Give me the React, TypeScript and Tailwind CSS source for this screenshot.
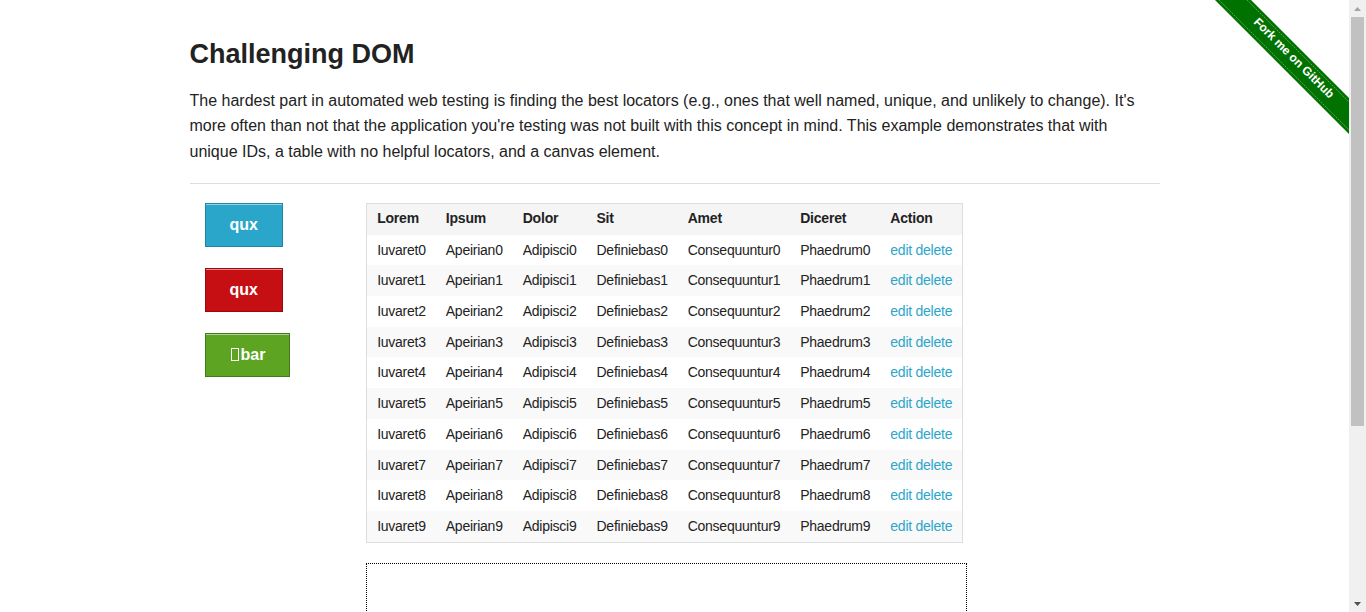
import React from "react";

const rows = Array.from({ length: 10 }, (_, i) => i);

function ForkRibbon() {
  return (
    <svg
      className="absolute top-0 right-0"
      width="137"
      height="137"
      viewBox="0 0 137 137"
    >
      <polygon points="3,0 39,0 137,98 137,134" fill="#007200" />
      <line x1="7" y1="0" x2="137" y2="130" stroke="rgba(255,255,255,0.35)" strokeWidth="1" strokeDasharray="2 1" />
      <line x1="35" y1="0" x2="137" y2="102" stroke="rgba(255,255,255,0.35)" strokeWidth="1" strokeDasharray="2 1" />
      <text
        transform="translate(82 58) rotate(45)"
        textAnchor="middle"
        dominantBaseline="central"
        fill="#ffffff"
        fontFamily="'Liberation Sans', Arial, sans-serif"
        fontWeight="700"
        fontSize="12"
      >
        Fork me on GitHub
      </text>
    </svg>
  );
}

// window scrollbar, as seen in the screenshot
function Scrollbar() {
  return (
    <div className="w-[17px] h-full flex flex-col bg-[#f0f0f0] shrink-0">
      <div className="h-[17px] flex items-center justify-center">
        <svg width="7" height="4" viewBox="0 0 7 4">
          <polygon points="0,4 3.5,0 7,4" fill="#a3a3a3" />
        </svg>
      </div>
      <div className="flex-1 px-[2px]">
        <div className="h-[409px] bg-[#c1c1c1]" />
      </div>
      <div className="h-[17px] flex items-center justify-center">
        <svg width="7" height="4" viewBox="0 0 7 4">
          <polygon points="0,0 3.5,4 7,0" fill="#505050" />
        </svg>
      </div>
    </div>
  );
}

const td = "px-[10px] py-[6px] text-[14px] leading-[18.7px] tracking-[-0.25px]";

export default function App() {
  return (
    <div className="flex h-[612px] bg-white overflow-hidden">
      <div className="relative flex-1 overflow-hidden text-[#222222] font-['Liberation_Sans',Arial,sans-serif]">
        <ForkRibbon />
        <div className="w-[970px] mx-auto pt-[36px]">
          <h3 className="text-[27px] leading-[1.4] font-bold mb-[14px]">Challenging DOM</h3>
          <p className="text-[16px] leading-[1.6]">
            The hardest part in automated web testing is finding the best locators (e.g., ones that well named,
            unique, and unlikely to change). It's more often than not that the application you're testing was not
            built with this concept in mind. This example demonstrates that with unique IDs, a table with no
            helpful locators, and a canvas element.
          </p>
          <hr className="mt-[18px] mb-[19px] border-0 border-t border-[#dddddd]" />

          <div className="flex">
            {/* buttons column */}
            <div className="w-[161.67px] px-[15px] flex flex-col items-start gap-[21px]">
              <a className="block h-[44px] px-[24px] leading-[42px] text-[16px] font-bold text-white bg-[#2ba6cb] border border-[#2284a1] shadow-[inset_0_1px_0_rgba(255,255,255,0.5)]">
                qux
              </a>
              <a className="block h-[44px] px-[24px] leading-[42px] text-[16px] font-bold text-white bg-[#c60f13] border border-[#970b0e] shadow-[inset_0_1px_0_rgba(255,255,255,0.5)]">
                qux
              </a>
              <a className="flex items-center h-[44px] px-[24px] text-[16px] font-bold text-white bg-[#5da423] border border-[#457a1a] shadow-[inset_0_1px_0_rgba(255,255,255,0.5)]">
                <span className="inline-block w-[8px] h-[13px] border border-white ml-[1px] mr-[2px]" />
                bar
              </a>
            </div>

            {/* table + canvas column */}
            <div className="w-[808.33px] px-[15px]">
              <table className="border border-[#dddddd] bg-white mb-[20px] border-collapse">
                <thead className="bg-[#f5f5f5]">
                  <tr>
                    {["Lorem", "Ipsum", "Dolor", "Sit", "Amet", "Diceret", "Action"].map(h => (
                      <th
                        key={h}
                        className="px-[10px] pt-[5px] pb-[8px] text-left text-[14px] leading-[18px] tracking-[-0.2px] font-bold"
                      >
                        {h}
                      </th>
                    ))}
                  </tr>
                </thead>
                <tbody>
                  {rows.map(i => (
                    <tr key={i} className={i % 2 === 1 ? "bg-[#f9f9f9]" : "bg-white"}>
                      <td className={td}>Iuvaret{i}</td>
                      <td className={td}>Apeirian{i}</td>
                      <td className={td}>Adipisci{i}</td>
                      <td className={td}>Definiebas{i}</td>
                      <td className={td}>Consequuntur{i}</td>
                      <td className={td}>Phaedrum{i}</td>
                      <td className={`${td} text-[#2ba6cb]`}>
                        <a href="#edit">edit</a> <a href="#delete">delete</a>
                      </td>
                    </tr>
                  ))}
                </tbody>
              </table>
              <div className="w-[601px] h-[202px] border border-dotted border-black" />
            </div>
          </div>

          <hr className="mt-[20px] mb-[19px] border-0 border-t border-[#dddddd]" />
          <div className="text-center text-[14px] pb-[40px]">
            Powered by <a className="text-[#2ba6cb]" href="#es">Elemental Selenium</a>
          </div>
        </div>
      </div>
      <Scrollbar />
    </div>
  );
}
